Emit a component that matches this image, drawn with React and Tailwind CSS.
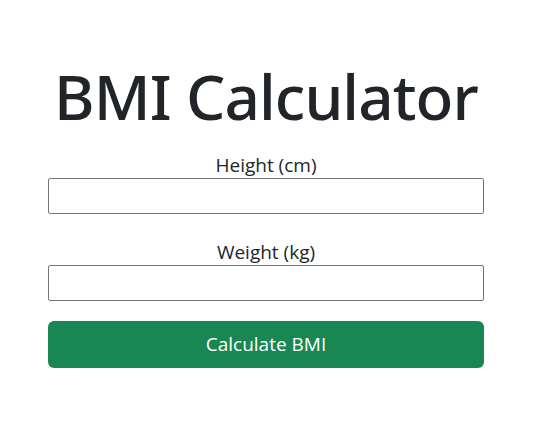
export default function App() {
  return (
    <div className="min-h-screen bg-white">
      <div className="ml-[48px] w-[436px] pt-[58px] text-[#212529]" style={{ fontFamily: '"Open Sans", sans-serif' }}>
        <h1 className="text-center text-[62px] leading-[76px] font-medium tracking-[-0.9px] whitespace-nowrap" style={{ fontFamily: '"Noto Sans", sans-serif' }}>BMI Calculator</h1>
        <div className="mt-[19px] flex flex-col">
          <label className="text-center text-[19px] leading-[24px]">Height (cm)</label>
          <input type="text" className="mt-[1px] h-[36px] w-full border border-[#767676] rounded-[2px] bg-white" />
          <label className="mt-[26px] text-center text-[19px] leading-[24px]">Weight (kg)</label>
          <input type="text" className="mt-[1px] h-[36px] w-full border border-[#767676] rounded-[2px] bg-white" />
          <button className="mt-[20px] h-[47px] w-full rounded-[6px] bg-[#198754] text-white text-[19px]">Calculate BMI</button>
        </div>
      </div>
    </div>
  );
}
